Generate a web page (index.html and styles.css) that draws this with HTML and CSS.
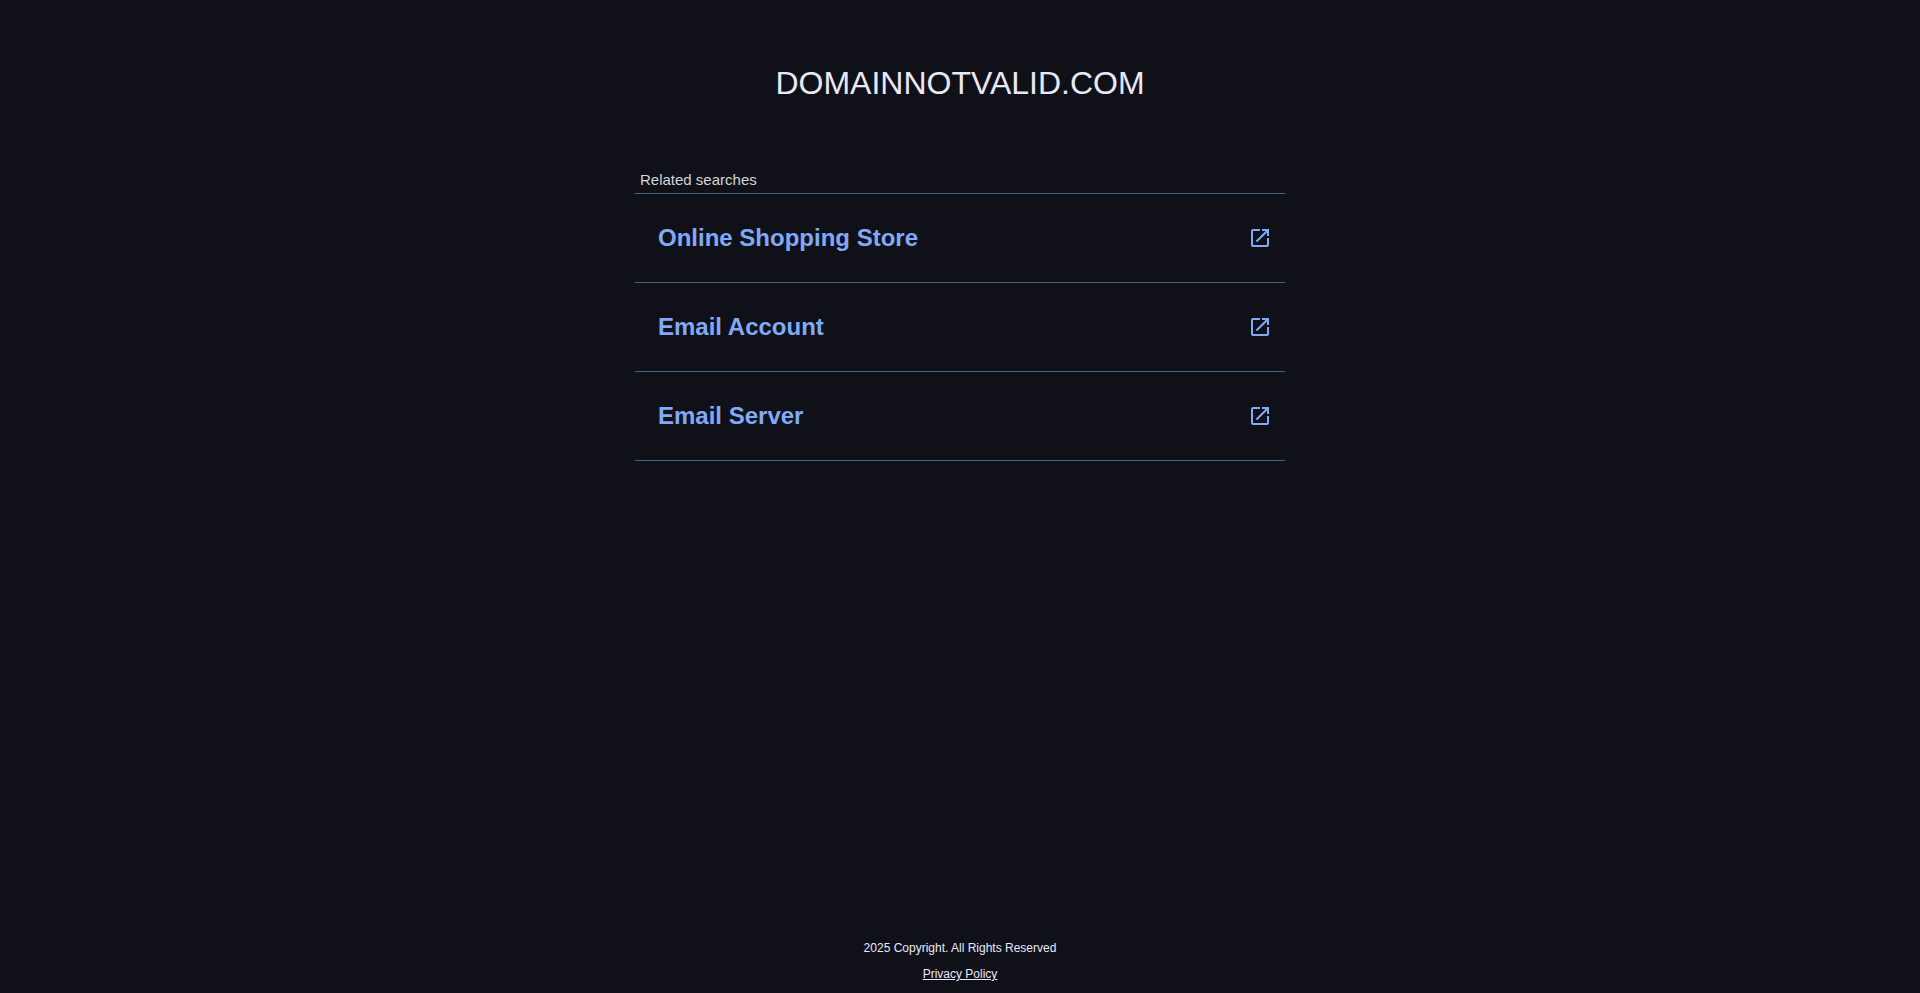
FILE: index.html
```html
<!DOCTYPE html>
<html lang="en">
<head>
<meta charset="utf-8">
<meta name="viewport" content="width=device-width, initial-scale=1">
<title>domainnotvalid.com</title>
<link rel="stylesheet" href="styles.css">
</head>
<body>
<header class="header"><h1 class="domain">DOMAINNOTVALID.COM</h1></header>
<main class="related">
  <h2 class="related-title">Related searches</h2>
  <ul class="related-list">
    <li class="related-item"><a class="related-link" href="#">Online Shopping Store<svg class="icon" viewBox="0 0 24 24" aria-hidden="true"><path d="M19 19H5V5h7V3H5a2 2 0 0 0-2 2v14a2 2 0 0 0 2 2h14c1.1 0 2-.9 2-2v-7h-2v7zM14 3v2h3.59l-9.83 9.83 1.41 1.41L19 6.41V10h2V3h-7z"/></svg></a></li>
    <li class="related-item"><a class="related-link" href="#">Email Account<svg class="icon" viewBox="0 0 24 24" aria-hidden="true"><path d="M19 19H5V5h7V3H5a2 2 0 0 0-2 2v14a2 2 0 0 0 2 2h14c1.1 0 2-.9 2-2v-7h-2v7zM14 3v2h3.59l-9.83 9.83 1.41 1.41L19 6.41V10h2V3h-7z"/></svg></a></li>
    <li class="related-item"><a class="related-link" href="#">Email Server<svg class="icon" viewBox="0 0 24 24" aria-hidden="true"><path d="M19 19H5V5h7V3H5a2 2 0 0 0-2 2v14a2 2 0 0 0 2 2h14c1.1 0 2-.9 2-2v-7h-2v7zM14 3v2h3.59l-9.83 9.83 1.41 1.41L19 6.41V10h2V3h-7z"/></svg></a></li>
  </ul>
</main>
<footer class="footer">
  <p class="copyright">2025 Copyright. All Rights Reserved</p>
  <a class="privacy" href="#">Privacy Policy</a>
</footer>
</body>
</html>
```
FILE: styles.css
```css
* {
  box-sizing: border-box;
}

body {
  display: flex;
  flex-direction: column;
  min-height: 100vh;
  margin: 0;
  background: #101118;
  color: #e8e8f8;
  font-family: Arial, "Liberation Sans", sans-serif;
}

.header {
  padding: 64px 16px;
  text-align: center;
}

.domain {
  margin: 0;
  font-size: 32px;
  font-weight: 400;
  line-height: 38px;
}

.related {
  width: 100%;
  max-width: 650px;
  margin: 0 auto;
}

.related-title {
  margin: 0;
  padding: 4px 5px;
  color: #d4d4d8;
  font-size: 15px;
  font-weight: 400;
  line-height: 19px;
}

.related-list {
  margin: 0;
  padding: 0;
  border-top: 1px solid #45617d;
  list-style: none;
}

.related-item {
  border-bottom: 1px solid #45617d;
}

.related-link {
  display: flex;
  align-items: center;
  justify-content: space-between;
  padding: 30px 13px 30px 23px;
  color: #80aaf8;
  font-size: 24px;
  font-weight: 700;
  line-height: 28px;
  text-decoration: none;
}

.icon {
  flex: none;
  width: 24px;
  height: 24px;
  fill: currentColor;
}

.footer {
  display: flex;
  flex-direction: column;
  align-items: center;
  gap: 12px;
  margin-top: auto;
  padding-bottom: 12px;
  font-size: 12px;
  line-height: 14px;
}

.copyright {
  margin: 0;
}

.privacy {
  color: inherit;
}
```
